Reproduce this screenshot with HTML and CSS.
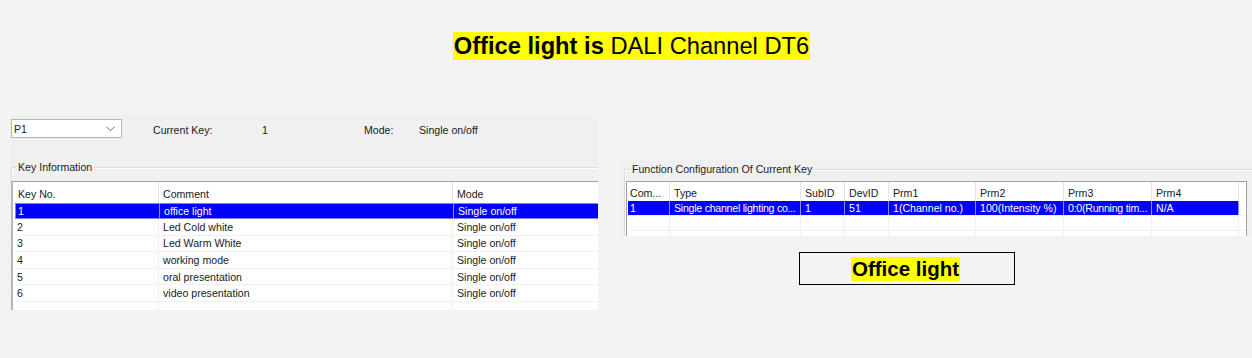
FILE: index.html
```html
<!DOCTYPE html>
<html>
<head>
<meta charset="utf-8">
<link rel="stylesheet" href="styles.css">
</head>
<body>
<div class="page">
  <div class="title-row">
    <span class="title"><b>Office light is</b> DALI Channel DT6</span>
  </div>
  <div class="main">
    <section class="left-panel">
      <div class="toolbar">
        <div class="combo">
          <span>P1</span>
          <svg class="chev" width="9" height="6" viewBox="0 0 9 6"><path d="M0.5 0.8 L4.5 4.8 L8.5 0.8" fill="none" stroke="#6d6d6d" stroke-width="1"/></svg>
        </div>
        <span class="lbl lbl-key">Current Key:</span>
        <span class="lbl val-key">1</span>
        <span class="lbl lbl-mode">Mode:</span>
        <span class="lbl">Single on/off</span>
      </div>
      <fieldset class="group group-left">
        <legend>Key Information</legend>
        <div class="ktable">
          <div class="krow khead"><div class="c">Key No.</div><div class="c">Comment</div><div class="c">Mode</div></div>
          <div class="krow sel"><div class="c">1</div><div class="c">office light</div><div class="c">Single on/off</div></div>
          <div class="krow"><div class="c">2</div><div class="c">Led Cold white</div><div class="c">Single on/off</div></div>
          <div class="krow"><div class="c">3</div><div class="c">Led Warm White</div><div class="c">Single on/off</div></div>
          <div class="krow"><div class="c">4</div><div class="c">working mode</div><div class="c">Single on/off</div></div>
          <div class="krow"><div class="c">5</div><div class="c">oral presentation</div><div class="c">Single on/off</div></div>
          <div class="krow"><div class="c">6</div><div class="c">video presentation</div><div class="c">Single on/off</div></div>
          <div class="krow kempty"><div class="c"></div><div class="c"></div><div class="c"></div></div>
        </div>
      </fieldset>
    </section>
    <div class="right-col">
      <section class="right-panel">
        <fieldset class="group group-right">
          <legend>Function Configuration Of Current Key</legend>
          <div class="ftable">
            <div class="frow fhead"><div class="c">Com...</div><div class="c">Type</div><div class="c">SubID</div><div class="c">DevID</div><div class="c">Prm1</div><div class="c">Prm2</div><div class="c">Prm3</div><div class="c">Prm4</div><div class="c"></div></div>
            <div class="frow sel"><div class="c">1</div><div class="c tight">Single channel lighting co...</div><div class="c">1</div><div class="c">51</div><div class="c">1(Channel no.)</div><div class="c">100(Intensity %)</div><div class="c tight">0:0(Running tim...</div><div class="c">N/A</div><div class="c nosel"></div></div>
            <div class="frow"><div class="c"></div><div class="c"></div><div class="c"></div><div class="c"></div><div class="c"></div><div class="c"></div><div class="c"></div><div class="c"></div><div class="c"></div></div>
            <div class="frow fempty"><div class="c"></div><div class="c"></div><div class="c"></div><div class="c"></div><div class="c"></div><div class="c"></div><div class="c"></div><div class="c"></div><div class="c"></div></div>
          </div>
        </fieldset>
      </section>
      <div class="name-box"><span class="name">Office light</span></div>
    </div>
  </div>
</div>
</body>
</html>
```

FILE: styles.css
```css
* { box-sizing: border-box; }
html, body { margin: 0; padding: 0; }
body {
  width: 1252px;
  height: 358px;
  background: #f3f3f3;
  font-family: "Liberation Sans", Arial, sans-serif;
  color: #000;
  overflow: hidden;
}
.page { display: flex; flex-direction: column; }

.title-row {
  display: flex;
  justify-content: center;
  padding-top: 32px;
  padding-left: 11px;
}
.title {
  background: #ffff00;
  font-size: 23.7px;
  line-height: 28px;
  padding: 0 1px;
}
.title b { font-weight: bold; }

.main {
  display: flex;
  align-items: flex-start;
  margin-top: 55px;
}

/* ---------- left panel ---------- */
.left-panel {
  margin-left: 10px;
  width: 588px;
  height: 196px;
  background: #f0f0f0;
  display: flex;
  flex-direction: column;
  font-size: 10.6px;
  color: #1a1a1a;
}
.toolbar {
  display: flex;
  align-items: center;
  padding-top: 4px;
  padding-left: 1px;
  height: 23px;
}
.combo {
  width: 111px;
  height: 19px;
  background: #fff;
  border: 1px solid #a9b7c9;
  display: flex;
  align-items: center;
  justify-content: space-between;
  padding: 1px 6px 0 2px;
}
.chev { display: block; }
.lbl { white-space: nowrap; padding-top: 3px; }
.lbl-key { margin-left: 31px; width: 109px; }
.val-key { width: 102px; }
.lbl-mode { width: 55px; }

.group {
  margin: 0;
  padding: 0;
  min-width: 0;
  border: none;
  border-top: 1px solid #dcdcdc;
  border-left: 1px solid #dcdcdc;
  box-shadow: inset 1px 1px 0 #fff;
}
.group legend {
  padding: 0 2px;
  margin-left: 4px;
  font-size: 10.6px;
  line-height: 12px;
  color: #1a1a1a;
}
.group-left {
  margin-top: 23px;
  margin-left: 1px;
  flex: 1;
  padding-top: 8px;
}

.ktable {
  margin-left: -1px;
  height: 129px;
  background: #fff;
  border-top: 1px solid #a0a0a0;
  border-left: 2px solid #b8b8b8;
  padding-left: 2px;
  display: flex;
  flex-direction: column;
}
.krow {
  display: grid;
  grid-template-columns: 144px 294px 1fr;
  height: 16.6px;
  align-items: center;
  border-bottom: 1px solid #f0f0f0;
}
.krow .c {
  height: 100%;
  display: flex;
  align-items: center;
  border-right: 1px solid #f0f0f0;
  white-space: nowrap;
  overflow: hidden;
}
.krow .c:nth-child(1) { padding-left: 2px; }
.krow .c:nth-child(2) { padding-left: 4px; }
.krow .c:nth-child(3) { padding-left: 4px; border-right: none; }
.khead { height: 21px; border-bottom: none; }
.khead .c { border-right-color: #e5e5e5; padding-top: 3px; }
.khead .c:nth-child(1) { padding-left: 3px; }
.krow.sel { background: #0000ff; color: #fff; border: 1px solid #8080ff; border-right: none; height: 16px; }
.krow.sel .c { border-right-color: #8c8cff; }
.kempty { flex: 1; border-bottom: none; }

/* ---------- right column ---------- */
.right-col {
  margin-left: 23px;
  flex: 1;
  display: flex;
  flex-direction: column;
  align-items: flex-start;
}
.right-panel {
  width: 100%;
  height: 76px;
  margin-top: 45px;
  background: #f0f0f0;
  padding-left: 3px;
  padding-top: 3px;
  font-size: 10.6px;
  color: #1a1a1a;
}
.group-right {
  height: 100%;
  padding-top: 6px;
  padding-left: 1px;
}
.ftable {
  height: 100%;
  background: #fff;
  border-top: 1px solid #a0a0a0;
  border-left: 1px solid #a0a0a0;
  border-right: 1px solid #a0a0a0;
  width: 621px;
  padding-left: 1px;
  display: flex;
  flex-direction: column;
}
.frow {
  display: grid;
  grid-template-columns: 42px 131px 44px 44px 87px 88px 88px 87px 1fr;
  height: 15px;
  border-bottom: 1px solid #f0f0f0;
}
.frow .c {
  height: 100%;
  display: flex;
  align-items: center;
  border-right: 1px solid #f0f0f0;
  padding-left: 4px;
  white-space: nowrap;
  overflow: hidden;
}
.frow .c.tight { letter-spacing: -0.25px; }
.frow .c:nth-child(1) { padding-left: 2px; }
.frow .c:last-child { border-right: none; }
.fhead { height: 19px; border-bottom: none; }
.fhead .c { border-right-color: #e5e5e5; padding-top: 2px; }
.frow.sel { background: #0000ff; color: #fff; }
.frow.sel .c { border-right-color: #8c8cff; }
.frow.sel .c.nosel { background: #fff; }
.fempty { flex: 1; border-bottom: none; }

.name-box {
  margin-left: 178px;
  margin-top: 16px;
  width: 216px;
  height: 33px;
  border: 1.5px solid #000;
  display: flex;
  justify-content: center;
  align-items: center;
}
.name {
  background: #ffff00;
  font-weight: bold;
  font-size: 20.5px;
  line-height: 24px;
  padding: 0 1px;
  margin-right: 3px;
}
```
